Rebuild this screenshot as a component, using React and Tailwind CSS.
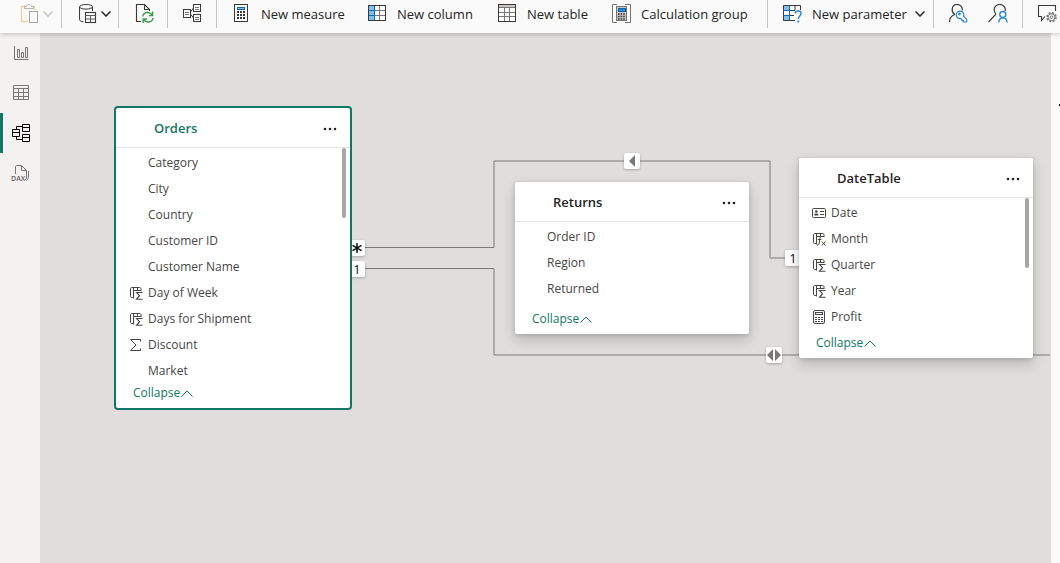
import React from "react";

function Icon({ children, size = 20 }) {
  return (
    <svg width={size} height={size} viewBox={`0 0 ${size} ${size}`} fill="none" stroke="#3b3a39" aria-hidden="true" className="shrink-0">
      {children}
    </svg>
  );
}

const Chevron = ({ color = "#252423" }) => (
  <svg width="10" height="6" viewBox="0 0 10 6" fill="none" stroke={color} strokeWidth="1.5" aria-hidden="true" className="shrink-0">
    <path d="M0.5 0.5L5 5L9.5 0.5" />
  </svg>
);

const PasteIcon = () => (
  <Icon>
    <path d="M5 2.5H1.5V17.5H8M12 2.5H14.5V6" stroke="#f5cfa0" strokeWidth="1.4" />
    <path d="M4.5 4.5V2.5H6.5C6.5 0 11.5 0 11.5 2.5H13.5V4.5Z" fill="#fafafa" stroke="#b5b4b2" />
    <rect x="9.5" y="7.5" width="8" height="11" fill="#fafafa" stroke="#a5a4a2" />
  </Icon>
);

const DatabaseIcon = () => (
  <Icon>
    <ellipse cx="8" cy="2.8" rx="6.5" ry="2.3" />
    <path d="M1.5 3V15.5C1.5 16.8 3 17.6 5.5 17.8M14.5 3V7" />
    <rect x="7.5" y="8.5" width="10" height="10" strokeWidth="1.1" />
    <path d="M7.5 11.5H17.5M7.5 15H17.5M12.5 11.5V18.5" stroke="#605e5c" />
  </Icon>
);

const RefreshIcon = () => (
  <Icon>
    <path d="M6 17.5H1.5V0.5H9.5L14.5 5.5V7M9.5 0.5V5.5H14.5" strokeWidth="1.1" />
    <g stroke="#3a9b4c" strokeWidth="1.4">
      <path d="M7.8 12.5C8.5 7.8 14.5 7 17.3 11.2M17.6 7.6V11.6H13.8" />
      <path d="M18 14C17.3 18.8 11.3 19.4 8.5 15.5M8.2 19V15H12" />
    </g>
  </Icon>
);

const ModelIcon = () => (
  <Icon>
    <rect x="1.5" y="5.5" width="7" height="8" />
    <rect x="11.5" y="0.5" width="7" height="7" />
    <rect x="11.5" y="10.5" width="7" height="7" />
    <path d="M8.5 8L11.5 4M8.5 10L11.5 14" />
    <path d="M3 8.5H7M3 10.5H7M13 3.5H17M13 5.5H17M13 13.5H17M13 15.5H17" stroke="#797775" />
  </Icon>
);

const CalculatorIcon = () => (
  <Icon>
    <rect x="3.5" y="0.5" width="13" height="17" fill="#fff" />
    <rect x="6.5" y="3.5" width="7" height="2" fill="#83beec" stroke="#1664a7" />
    <path d="M6 8H14M6 11H14M6 14H14" strokeWidth="2" strokeDasharray="2 1" />
  </Icon>
);

const ColumnIcon = () => (
  <Icon>
    <rect x="1.5" y="1.5" width="17" height="15" fill="#fff" />
    <rect x="2" y="2" width="5" height="14" fill="#83beec" stroke="none" />
    <path d="M7 6.5H18M7 11.5H18M12.5 2V16" stroke="#797775" />
    <path d="M7.5 2V16M2 6.5H7M2 11.5H7" stroke="#0f6cbd" />
    <rect x="1.5" y="1.5" width="17" height="15" />
  </Icon>
);

const TableIcon = () => (
  <Icon>
    <rect x="1.5" y="0.5" width="17" height="17" fill="#fff" />
    <rect x="2" y="1" width="16" height="2" fill="#c8c6c4" stroke="none" />
    <path d="M2 3.5H18M2 8.5H18M2 12.5H18M7.5 4V17M12.5 4V17" stroke="#797775" />
    <rect x="1.5" y="0.5" width="17" height="17" />
  </Icon>
);

const CalcGroupIcon = () => (
  <Icon>
    <path d="M6 0.5H1.5V18.5H6M14 0.5H19.5V18.5H14" stroke="#797775" />
    <rect x="5.5" y="2.5" width="10" height="14" fill="#c8c6c4" stroke="#797775" />
    <rect x="7.5" y="4.5" width="7" height="3" fill="#2b88d8" stroke="#1664a7" />
    <path d="M7 10H14M7 12.5H14M7 15H14" strokeWidth="1.4" strokeDasharray="1.6 1" />
  </Icon>
);

const ParameterIcon = () => (
  <Icon>
    <rect x="1.5" y="1.5" width="6" height="15" fill="#83beec" stroke="none" />
    <rect x="2" y="6.5" width="5" height="5" fill="#fff" stroke="none" />
    <path d="M18.5 6V1.5H1.5V16.5H13M13 1.5V6M7 6.5H13M7 11.5H12" />
    <path d="M7.5 1.5V16.5M1.5 6.5H7.5M1.5 11.5H7.5" stroke="#0f6cbd" />
    <path d="M13.2 9.5C13.2 6 19 6 19 9.5C19 12 16.3 12 16.3 15" stroke="#2b88d8" strokeWidth="1.5" />
    <path d="M16.3 16.5V18.5" stroke="#2b88d8" strokeWidth="1.8" />
  </Icon>
);

const PersonKeyIcon = () => (
  <Icon>
    <path d="M7 10.5C2.8 8.5 3.3 0.5 9 0.5C12.8 0.5 14.8 3.5 14.2 6.5M7 10.5C4 11.5 1.5 14 1.5 18" strokeWidth="1.2" />
    <g stroke="#2b88d8" strokeWidth="1.2">
      <path d="M15.6 12.2A3.8 3.8 0 1 0 12.6 14.6L13.8 15.2V16.5H15.2V18H18.7V15.4Z" fill="#fafafa" />
      <circle cx="11.4" cy="10" r="0.8" />
    </g>
  </Icon>
);

const PersonSearchIcon = () => (
  <Icon>
    <path d="M8 10.5C4.5 6 6.5 0.5 11.5 0.5C16 0.5 18 4 17 7M8 10.2L0.5 18" strokeWidth="1.2" />
    <g stroke="#2b88d8" strokeWidth="1.4">
      <circle cx="14.8" cy="10.5" r="3" />
      <path d="M10.8 18.5C11 12.3 18.8 12.3 19 18.5" />
    </g>
  </Icon>
);

const CommentGearIcon = () => (
  <Icon>
    <path d="M8 12.5L4.5 16.5V12.5H1.5V1.5H18.5V7" strokeWidth="1.1" />
    <circle cx="14.5" cy="13.2" r="4.4" stroke="#797775" strokeWidth="1.8" strokeDasharray="2 1.455" />
    <circle cx="14.5" cy="13.2" r="3.4" fill="#fafafa" stroke="#797775" />
    <circle cx="14.5" cy="13.2" r="1.3" stroke="#797775" />
  </Icon>
);

const ReportViewIcon = () => (
  <Icon>
    <path d="M3.5 3V16.5H17.5M6.5 6.5H8.5V14.5H6.5ZM10.5 9.5H12.5V14.5H10.5ZM14.5 4.5H16.5V14.5H14.5Z" stroke="#797775" />
  </Icon>
);

const TableViewIcon = () => (
  <Icon>
    <path d="M2.5 2.5H17.5V16.5H2.5ZM2.5 5.5H17.5M2.5 9.5H17.5M2.5 13.5H17.5M7.5 5.5V16.5M12.5 5.5V16.5" stroke="#797775" />
  </Icon>
);

const ModelViewIcon = () => (
  <Icon>
    <g stroke="#000">
      <path d="M1.5 6.5H8.5V13.5H1.5ZM1.5 9.5H8.5" />
      <path d="M11.5 1.5H18.5V8.5H11.5ZM11.5 4.5H18.5" />
      <path d="M11.5 11.5H18.5V18.5H11.5ZM11.5 14.5H18.5" />
      <path d="M5.5 6.5V3.5H11.5M5.5 13.5V16.5H11.5" />
    </g>
  </Icon>
);

const DaxIcon = () => (
  <Icon>
    <path d="M4.5 11V4C4.5 3 5 2.5 6 2.5H10.5L15.5 7.5V15C15.5 16 15 16.5 14 17M10.5 2.5V7.5H15.5M17.5 8V13C17.5 15 17 16.5 15.5 17.5" stroke="#797775" />
    <text x="0" y="18" fontSize="7" fontWeight="600" fill="#605e5c" stroke="none" fontFamily="Open Sans, sans-serif">DAX</text>
  </Icon>
);

const columnBase = "M4.5 11.5H3C2 11.5 1.5 11 1.5 10V3C1.5 2 2 1.5 3 1.5H10.5C11.5 1.5 12 2 12 3V5M4.5 1.5V12.5M4.5 4.5H12M8.5 1.5V4.5";

const ColumnSumIcon = () => (
  <Icon size={14}>
    <path d={columnBase} stroke="#484644" />
    <path d="M13.5 6.5H7.5L10.5 9.7L7.5 13.3H13.5" stroke="#484644" strokeWidth="1.1" />
  </Icon>
);

const ColumnFxIcon = () => (
  <Icon size={14}>
    <path d={columnBase} stroke="#484644" />
    <path d="M10 4.5C8 4 8 6 7.5 9C7.2 12 7 13.5 5 13.2M5.8 7.5H9.5M9.8 9.5L13.5 13.5M13.5 9.5L9.8 13.5" stroke="#484644" />
  </Icon>
);

const SigmaIcon = () => (
  <Icon size={14}>
    <path d="M11.5 3.5V1.5H1.5L7 7L1.5 12.5H11.5V10.5" stroke="#484644" />
  </Icon>
);

const IdCardIcon = () => (
  <Icon size={14}>
    <rect x="0.5" y="2.5" width="13" height="9" rx="1" stroke="#484644" />
    <circle cx="4.3" cy="5.5" r="1.3" fill="#484644" stroke="none" />
    <path d="M2.3 9.5V8.5C2.3 7 6.3 7 6.3 8.5V9.5Z" fill="#484644" stroke="none" />
    <path d="M8 5.5H12M8 8.5H12" stroke="#484644" />
  </Icon>
);

const MeasureIcon = () => (
  <Icon size={14}>
    <rect x="1.5" y="0.5" width="11" height="13" rx="1.5" stroke="#484644" />
    <rect x="3.5" y="2.5" width="7" height="2" stroke="#484644" />
    <path d="M3 7.5H11M3 9.5H11M3 11.5H11" stroke="#484644" strokeDasharray="2 1" />
  </Icon>
);

function ToolButton({ icon, label, text, chevron, chevronColor, className = "", disabled }) {
  return (
    <button type="button" aria-label={label} disabled={disabled} className={`flex h-7 items-center text-[13px] text-[#252423] ${className}`}>
      {icon}
      {text && <span className="ml-[10px] whitespace-nowrap leading-5 pb-px">{text}</span>}
      {chevron && <span className={text ? "ml-auto" : "ml-[3px]"}><Chevron color={chevronColor} /></span>}
    </button>
  );
}

const Group = ({ className, children }) => (
  <div className={`flex h-7 shrink-0 border-r border-[#c8c6c4] ${className}`}>{children}</div>
);

function Toolbar() {
  return (
    <header role="toolbar" aria-label="Modeling" className="relative z-20 h-[33px] shrink-0 bg-[#fafafa] shadow-[0_1px_5px_rgba(0,0,0,0.22)]">
      <div className="flex h-7 overflow-hidden">
        <Group className="w-[62px] pl-5">
          <ToolButton icon={<PasteIcon />} label="Paste" chevron chevronColor="#c8c6c4" disabled />
        </Group>
        <Group className="w-[57px] pl-4">
          <ToolButton icon={<DatabaseIcon />} label="Get data" chevron />
        </Group>
        <Group className="w-[49px] pl-4">
          <ToolButton icon={<RefreshIcon />} label="Refresh" />
        </Group>
        <Group className="w-[49px] pl-[14px]">
          <ToolButton icon={<ModelIcon />} label="Manage relationships" />
        </Group>
        <Group className="w-[551px] pl-[14px]">
          <ToolButton icon={<CalculatorIcon />} text="New measure" className="w-[136px]" />
          <ToolButton icon={<ColumnIcon />} text="New column" className="w-[130px]" />
          <ToolButton icon={<TableIcon />} text="New table" className="w-[114px]" />
          <ToolButton icon={<CalcGroupIcon />} text="Calculation group" />
        </Group>
        <Group className="w-[166px] pl-[14px]">
          <ToolButton icon={<ParameterIcon />} text="New parameter" chevron className="w-[143px]" />
        </Group>
        <Group className="w-[89px] gap-5 pl-[14px]">
          <ToolButton icon={<PersonKeyIcon />} label="Manage roles" />
          <ToolButton icon={<PersonSearchIcon />} label="View as" />
        </Group>
        <div className="flex h-7 shrink-0 pl-[14px]">
          <ToolButton icon={<CommentGearIcon />} label="Q&A setup" />
        </div>
      </div>
    </header>
  );
}

const views = [
  { label: "Report view", icon: <ReportViewIcon /> },
  { label: "Table view", icon: <TableViewIcon /> },
  { label: "Model view", icon: <ModelViewIcon />, active: true },
  { label: "DAX query view", icon: <DaxIcon /> },
];

function ViewRail() {
  return (
    <nav className="flex w-10 shrink-0 flex-col bg-[#f3f2f1]">
      {views.map((v) => (
        <button
          key={v.label}
          type="button"
          aria-label={v.label}
          className={`flex h-10 items-center border-l-[3px] pl-2 ${v.active ? "border-[#117865]" : "border-transparent"}`}
        >
          {v.icon}
        </button>
      ))}
    </nav>
  );
}

function TableCard({ name, fields, selected, scroll, className, listClass = "" }) {
  return (
    <section
      className={`absolute flex flex-col bg-white ${
        selected
          ? "rounded border-2 border-[#117865]"
          : "rounded-xs shadow-[0_6px_14px_rgba(0,0,0,0.18),0_1px_4px_rgba(0,0,0,0.14)]"
      } ${className}`}
    >
      <header className="flex h-10 items-center justify-between border-b border-[#e6e6e6] pt-[2px] pr-[13px] pl-[38px]">
        <h2 className={`text-[13px] font-semibold ${selected ? "text-[#117865]" : "text-[#252423]"}`}>{name}</h2>
        <button type="button" aria-label={`${name} options`}>
          <svg width="14" height="4" viewBox="0 0 14 4" fill="#252423" aria-hidden="true">
            <circle cx="2" cy="2" r="1.3" />
            <circle cx="7" cy="2" r="1.3" />
            <circle cx="12" cy="2" r="1.3" />
          </svg>
        </button>
      </header>
      <div className="relative">
        <ul className={`overflow-hidden py-[2px] ${listClass}`}>
          {fields.map(([field, icon]) => (
            <li key={field} className="flex h-[26px] items-center gap-[5px] pl-[13px] text-xs text-[#484644]">
              <span className="flex w-[14px]">{icon}</span>
              {field}
            </li>
          ))}
        </ul>
        {scroll && <div className="absolute top-0 right-1 h-[70px] w-1 rounded-full bg-[#a6a6a6]" />}
      </div>
      <button type="button" className="flex h-[30px] items-center gap-px pl-[17px] text-xs text-[#117865]">
        Collapse
        <svg width="12" height="7" viewBox="0 0 12 7" fill="none" stroke="#117865" aria-hidden="true">
          <path d="M0.5 6.5L6 1L11.5 6.5" />
        </svg>
      </button>
    </section>
  );
}

const Badge = ({ className, children }) => (
  <div className={`absolute flex size-4 items-center justify-center rounded-xs bg-white text-[13px] leading-none font-medium text-[#111] shadow-[0_1px_3px_rgba(0,0,0,0.25)] ${className}`}>
    {children}
  </div>
);

const ordersFields = [
  ["Category"],
  ["City"],
  ["Country"],
  ["Customer ID"],
  ["Customer Name"],
  ["Day of Week", <ColumnSumIcon />],
  ["Days for Shipment", <ColumnSumIcon />],
  ["Discount", <SigmaIcon />],
  ["Market"],
];

const returnsFields = [["Order ID"], ["Region"], ["Returned"]];

const dateFields = [
  ["Date", <IdCardIcon />],
  ["Month", <ColumnFxIcon />],
  ["Quarter", <ColumnSumIcon />],
  ["Year", <ColumnSumIcon />],
  ["Profit", <MeasureIcon />],
];

function Diagram() {
  return (
    <main className="relative flex-1 overflow-hidden bg-[#dfdedd]">
      <svg className="absolute inset-0 h-full w-full" fill="none" stroke="#7a7a7a" aria-hidden="true">
        <path d="M320 214.5H454V128H730V225H750" />
        <path d="M320 235.5H454V322H1010" />
      </svg>
      <Badge className="top-[207px] left-[309px]">
        <svg width="10" height="10" viewBox="0 0 10 10" stroke="#111" strokeWidth="1.5" aria-hidden="true">
          <path d="M5 0V10M0.5 2.4L9.5 7.6M9.5 2.4L0.5 7.6" />
        </svg>
      </Badge>
      <Badge className="top-[228px] left-[309px]">1</Badge>
      <Badge className="top-[120px] left-[584px]">
        <svg width="16" height="16" viewBox="0 0 16 16" fill="#7a7876" aria-hidden="true">
          <path d="M11 2V14L5 8Z" />
        </svg>
      </Badge>
      <Badge className="top-[217px] left-[745px]">1</Badge>
      <Badge className="top-[314px] left-[726px]">
        <svg width="16" height="16" viewBox="0 0 16 16" fill="#7a7876" aria-hidden="true">
          <path d="M7 2V14L1 8ZM9 2V14L15 8Z" />
        </svg>
      </Badge>
      <TableCard name="Orders" fields={ordersFields} selected scroll className="top-[73px] left-[74px] w-[238px]" listClass="max-h-[230px]" />
      <TableCard name="Returns" fields={returnsFields} className="top-[149px] left-[475px] w-[234px]" />
      <TableCard name="DateTable" fields={dateFields} scroll className="top-[125px] left-[759px] w-[234px]" listClass="max-h-[130px]" />
    </main>
  );
}

export default function App() {
  return (
    <div className="flex min-h-screen flex-col bg-[#fafafa] font-['Open_Sans',sans-serif]">
      <Toolbar />
      <div className="flex flex-1">
        <ViewRail />
        <Diagram />
        <aside className="flex w-[9px] shrink-0 justify-end bg-[#fafafa] pt-[71px]">
          <span className="h-[2px] w-px bg-black" />
        </aside>
      </div>
    </div>
  );
}
